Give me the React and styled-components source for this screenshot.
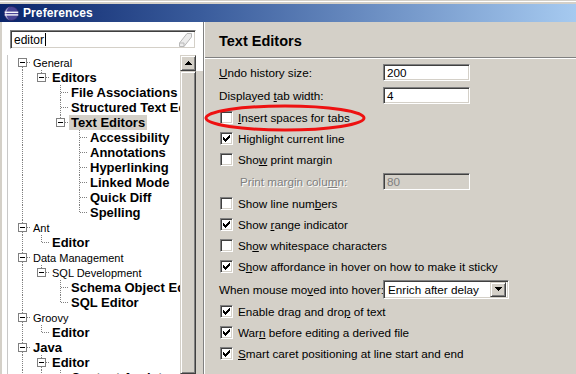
import React from "react";
import styled, { createGlobalStyle } from "styled-components";

const GRAY = "#d4d0c8";
const SHADOW = "#808080";
const DARK = "#404040";

const GlobalStyle = createGlobalStyle`
  html, body { margin: 0; padding: 0; background: ${GRAY}; }
  body { font-family: "Liberation Sans", Arial, sans-serif; color: #000; }
`;

const Window = styled.div`
  position: relative;
  width: 576px;
  height: 374px;
  overflow: hidden;
  display: flex;
  flex-direction: column;
  background: ${GRAY};
`;

const TopFrame = styled.div`
  height: 4px;
  flex: none;
  background: linear-gradient(${GRAY} 1px, #fff 1px, #fff 2px, ${GRAY} 2px);
`;

const TitleBar = styled.div`
  height: 18px;
  flex: none;
  display: flex;
  align-items: center;
  gap: 4px;
  padding-left: 4px;
  background: linear-gradient(90deg, #0a246a 0%, #3a5c9c 35%, #a6caf0 100%);
`;

const TitleText = styled.span`
  color: #fff;
  font-weight: bold;
  font-size: 12px;
  letter-spacing: 0.1px;
`;

const Body = styled.div`
  flex: 1;
  min-height: 0;
  display: flex;
`;

const LeftPane = styled.div`
  width: 203px;
  flex: none;
  box-sizing: border-box;
  border-left: 2px solid ${GRAY};
  background: #fff;
  padding-top: 8px;
  display: flex;
  flex-direction: column;
`;

const SearchBox = styled.div`
  margin-left: 8px;
  width: 186px;
  height: 19px;
  box-sizing: border-box;
  border: 1px solid;
  border-color: ${SHADOW} #fff #fff ${SHADOW};
  box-shadow: inset 1px 1px ${DARK}, inset -1px -1px ${GRAY};
  display: flex;
  align-items: center;
  padding: 0 3px 0 3px;
  font-size: 12px;
`;

const Caret = styled.span`
  width: 1px;
  height: 13px;
  background: #000;
  margin-left: 1px;
`;

const Spacer = styled.span`
  flex: 1;
`;

const TreeArea = styled.div`
  margin-top: 6px;
  margin-left: 5px;
  flex: 1;
  min-height: 0;
  display: flex;
`;

const TreeBox = styled.div`
  flex: 1;
  min-width: 0;
  border-left: 1px solid #c8c8c8;
  overflow: hidden;
  background: #fff;
`;

const TreeRow = styled.div`
  height: 15px;
  display: flex;
  align-items: stretch;
  white-space: nowrap;
`;

const TreeLabel = styled.span`
  display: flex;
  align-items: center;
  padding: 0 2px;
  font-size: ${(p) => (p.$bold ? "13px" : "11px")};
  font-weight: ${(p) => (p.$bold ? "bold" : "normal")};
  background: ${(p) => (p.$selected ? GRAY : "transparent")};
`;

const Scrollbar = styled.div`
  width: 16px;
  flex: none;
  display: flex;
  flex-direction: column;
  background: ${GRAY};
`;

const raised = `
  background: ${GRAY};
  box-sizing: border-box;
  border: 1px solid;
  border-color: ${GRAY} ${DARK} ${DARK} ${GRAY};
  box-shadow: inset 1px 1px #fff, inset -1px -1px ${SHADOW};
`;

const ScrollButton = styled.div`
  ${raised}
  height: 16px;
  flex: none;
  display: flex;
  align-items: center;
  justify-content: center;
`;

const ScrollThumb = styled.div`
  ${raised}
  flex: 1;
`;

const Gutter = styled.div`
  width: 7px;
  flex: none;
  background: linear-gradient(#fff 16px, ${GRAY} 16px);
`;

const RightPane = styled.div`
  flex: 1;
  min-width: 0;
  border-left: 1px solid ${SHADOW};
  box-shadow: inset 1px 0 #fff;
  display: flex;
  flex-direction: column;
  font-size: 11.7px;
`;

const PageHeader = styled.div`
  height: 35px;
  box-sizing: border-box;
  padding: 3px 0 0 15px;
  display: flex;
  align-items: center;
  font-size: 14.5px;
  font-weight: bold;
`;

const Separator = styled.div`
  margin-left: 1px;
  border-top: 1px solid ${SHADOW};
  border-bottom: 1px solid #fff;
`;

const Content = styled.div`
  padding: 2px 0 0 15px;
  display: flex;
  flex-direction: column;
`;

const Row = styled.div`
  height: ${(p) => p.$h}px;
  flex: none;
  display: flex;
  align-items: center;
  white-space: nowrap;
`;

const FieldLabel = styled.span`
  width: 164px;
  flex: none;
  box-sizing: border-box;
  padding-left: ${(p) => (p.$indent ? 21 : 0)}px;
  color: ${(p) => (p.$disabled ? SHADOW : "#000")};
  text-shadow: ${(p) => (p.$disabled ? "1px 1px #fff" : "none")};
`;

const sunken = `
  box-sizing: border-box;
  border: 1px solid;
  border-color: ${SHADOW} #fff #fff ${SHADOW};
  box-shadow: inset 1px 1px ${DARK}, inset -1px -1px ${GRAY};
`;

const TextField = styled.div`
  ${sunken}
  width: 87px;
  height: 17px;
  padding-left: 3px;
  display: flex;
  align-items: center;
  background: ${(p) => (p.$disabled ? GRAY : "#fff")};
  color: ${(p) => (p.$disabled ? SHADOW : "#000")};
`;

const Combo = styled.div`
  ${sunken}
  width: 126px;
  height: 19px;
  padding: 2px 2px 2px 4px;
  display: flex;
  align-items: center;
  background: #fff;
`;

const ComboButton = styled.div`
  ${raised}
  width: 16px;
  height: 15px;
  display: flex;
  align-items: center;
  justify-content: center;
`;

const CheckRow = styled.div`
  display: flex;
  align-items: center;
  gap: 5px;
  margin-left: 1px;
`;

const CheckBox = styled.span`
  ${sunken}
  width: 13px;
  height: 13px;
  flex: none;
  background: #fff;
  display: flex;
  align-items: center;
  justify-content: center;
`;

const Annotation = styled.svg`
  position: absolute;
  left: 0;
  top: 0;
  pointer-events: none;
`;

// "&" marks the mnemonic letter
const Mnemonic = ({ text }) => {
  const i = text.indexOf("&");
  if (i < 0) return text;
  return (
    <>
      {text.slice(0, i)}
      <u>{text[i + 1]}</u>
      {text.slice(i + 2)}
    </>
  );
};

const EclipseIcon = () => (
  <svg width="15" height="15" viewBox="0 0 16 16" style={{ flex: "none" }}>
    <circle cx="8" cy="8" r="7.5" fill="#4a4596" />
    <path d="M8 0.5 A7.5 7.5 0 0 0 8 15.5 A5.5 7.5 0 0 1 8 0.5z" fill="#b3aee0" />
    <circle cx="8" cy="8" r="7.5" fill="none" stroke="#2a2560" strokeWidth="0.8" />
    <rect x="0.8" y="6" width="14.4" height="1.4" fill="#fff" />
    <rect x="0.8" y="8.8" width="14.4" height="1.4" fill="#fff" />
  </svg>
);

const EraserIcon = () => (
  <svg width="13" height="14" viewBox="0 0 13 14">
    <polygon points="8,0.5 12.5,0.5 12.5,4 5,13.5 0.5,13.5 0.5,10" fill="#ececec" stroke="#b8b8b8" />
    <line x1="0.5" y1="10" x2="5" y2="10" stroke="#b8b8b8" />
    <line x1="5" y1="10" x2="5" y2="13.5" stroke="#b8b8b8" />
  </svg>
);

const UpArrow = () => (
  <svg width="7" height="4" viewBox="0 0 7 4" shapeRendering="crispEdges">
    <path d="M3 0h1v1h-1zM2 1h3v1h-3zM1 2h5v1h-5zM0 3h7v1h-7z" fill="#000" />
  </svg>
);

const DownArrow = () => (
  <svg width="7" height="4" viewBox="0 0 7 4" shapeRendering="crispEdges">
    <path d="M0 0h7v1h-7zM1 1h5v1h-5zM2 2h3v1h-3zM3 3h1v1h-1z" fill="#000" />
  </svg>
);

const CheckMark = () => (
  <svg width="7" height="7" viewBox="0 0 7 7" shapeRendering="crispEdges">
    <path
      d="M6 0h1v1h-1zM5 1h2v1h-2zM0 2h1v1h-1zM4 2h3v1h-3zM0 3h2v1h-2zM3 3h3v1h-3zM0 4h5v1h-5zM1 5h3v1h-3zM2 6h1v1h-1z"
      fill="#000"
    />
  </svg>
);

const tree = [
  { l: 0, t: "General", box: true },
  { l: 1, t: "Editors", box: true, b: true },
  { l: 2, t: "File Associations", b: true },
  { l: 2, t: "Structured Text Editors", b: true },
  { l: 2, t: "Text Editors", box: true, b: true, sel: true },
  { l: 3, t: "Accessibility", b: true },
  { l: 3, t: "Annotations", b: true },
  { l: 3, t: "Hyperlinking", b: true },
  { l: 3, t: "Linked Mode", b: true },
  { l: 3, t: "Quick Diff", b: true },
  { l: 3, t: "Spelling", b: true },
  { l: 0, t: "Ant", box: true },
  { l: 1, t: "Editor", b: true },
  { l: 0, t: "Data Management", box: true },
  { l: 1, t: "SQL Development", box: true },
  { l: 2, t: "Schema Object Editor", b: true },
  { l: 2, t: "SQL Editor", b: true },
  { l: 0, t: "Groovy", box: true },
  { l: 1, t: "Editor", b: true },
  { l: 0, t: "Java", box: true, b: true },
  { l: 1, t: "Editor", box: true, b: true },
  { l: 2, t: "Content Assist", b: true },
  { l: 2, t: "Folding", b: true },
];

// the list goes on below the window, so a branch that reaches the end stays open
const hasNext = (i) => {
  const l = tree[i].l;
  for (let j = i + 1; j < tree.length; j++) {
    if (tree[j].l === l) return true;
    if (tree[j].l < l) return false;
  }
  return true;
};

const ancestorOpen = (i, a) => {
  for (let j = i - 1; j >= 0; j--) {
    if (tree[j].l === a) return hasNext(j);
  }
  return false;
};

const STEP = 19;
const dots = { stroke: SHADOW, strokeWidth: 1, strokeDasharray: "1 1" };

const Guides = ({ i }) => {
  const { l, box } = tree[i];
  const w = 23 + STEP * l;
  const cx = 14 + STEP * l + 0.5;
  const lines = [];
  for (let a = 0; a < l; a++) {
    if (ancestorOpen(i, a)) {
      const x = 14 + STEP * a + 0.5;
      lines.push(<line key={a} x1={x} y1="0" x2={x} y2="15" style={dots} />);
    }
  }
  return (
    <svg width={w} height="15" style={{ flex: "none" }} shapeRendering="crispEdges">
      {lines}
      {i > 0 && <line x1={cx} y1="0" x2={cx} y2="7" style={dots} />}
      {hasNext(i) && <line x1={cx} y1="8" x2={cx} y2="15" style={dots} />}
      <line x1={cx} y1="7.5" x2={w} y2="7.5" style={dots} />
      {box && (
        <>
          <rect x={10.5 + STEP * l} y="3.5" width="8" height="8" fill="#fff" stroke={SHADOW} />
          <rect x={12 + STEP * l} y="7" width="5" height="1" fill="#000" />
        </>
      )}
    </svg>
  );
};

const fields = [
  { kind: "field", label: "&Undo history size:", value: "200", h: 23 },
  { kind: "field", label: "Displayed &tab width:", value: "4", h: 23 },
  { kind: "check", label: "&Insert spaces for tabs", checked: false, h: 21 },
  { kind: "check", label: "Hi&ghlight current line", checked: true, h: 21 },
  { kind: "check", label: "Sho&w print margin", checked: false, h: 21 },
  { kind: "field", label: "Print margin colu&mn:", value: "80", disabled: true, h: 23 },
  { kind: "check", label: "Show line num&bers", checked: false, h: 21 },
  { kind: "check", label: "Show &range indicator", checked: true, h: 21 },
  { kind: "check", label: "Sh&ow whitespace characters", checked: false, h: 21 },
  { kind: "check", label: "S&how affordance in hover on how to make it sticky", checked: true, h: 21 },
  { kind: "combo", label: "When mouse mo&ved into hover:", value: "Enrich after delay", h: 24 },
  { kind: "check", label: "Enable drag and dro&p of text", checked: true, h: 21 },
  { kind: "check", label: "War&n before editing a derived file", checked: true, h: 21 },
  { kind: "check", label: "&Smart caret positioning at line start and end", checked: true, h: 21 },
];

const FieldRow = ({ f }) => {
  if (f.kind === "check") {
    return (
      <Row $h={f.h}>
        <CheckRow>
          <CheckBox>{f.checked && <CheckMark />}</CheckBox>
          <span>
            <Mnemonic text={f.label} />
          </span>
        </CheckRow>
      </Row>
    );
  }
  if (f.kind === "combo") {
    return (
      <Row $h={f.h}>
        <FieldLabel>
          <Mnemonic text={f.label} />
        </FieldLabel>
        <Combo>
          <span>{f.value}</span>
          <Spacer />
          <ComboButton>
            <DownArrow />
          </ComboButton>
        </Combo>
      </Row>
    );
  }
  return (
    <Row $h={f.h}>
      <FieldLabel $indent={f.disabled} $disabled={f.disabled}>
        <Mnemonic text={f.label} />
      </FieldLabel>
      <TextField $disabled={f.disabled}>{f.value}</TextField>
    </Row>
  );
};

export default function App() {
  return (
    <Window>
      <GlobalStyle />
      <TopFrame />
      <TitleBar>
        <EclipseIcon />
        <TitleText>Preferences</TitleText>
      </TitleBar>
      <Body>
        <LeftPane>
          <SearchBox>
            <span>editor</span>
            <Caret />
            <Spacer />
            <EraserIcon />
          </SearchBox>
          <TreeArea>
            <TreeBox>
              {tree.map((n, i) => (
                <TreeRow key={i}>
                  <Guides i={i} />
                  <TreeLabel $bold={n.b} $selected={n.sel}>
                    {n.t}
                  </TreeLabel>
                </TreeRow>
              ))}
            </TreeBox>
            <Scrollbar>
              <ScrollButton>
                <UpArrow />
              </ScrollButton>
              <ScrollThumb />
            </Scrollbar>
            <Gutter />
          </TreeArea>
        </LeftPane>
        <RightPane>
          <PageHeader>Text Editors</PageHeader>
          <Separator />
          <Content>
            {fields.map((f, i) => (
              <FieldRow key={i} f={f} />
            ))}
          </Content>
        </RightPane>
      </Body>
      <Annotation width="576" height="374">
        <ellipse cx="285" cy="118" rx="79" ry="12" fill="none" stroke="#ee1111" strokeWidth="3" />
      </Annotation>
    </Window>
  );
}
